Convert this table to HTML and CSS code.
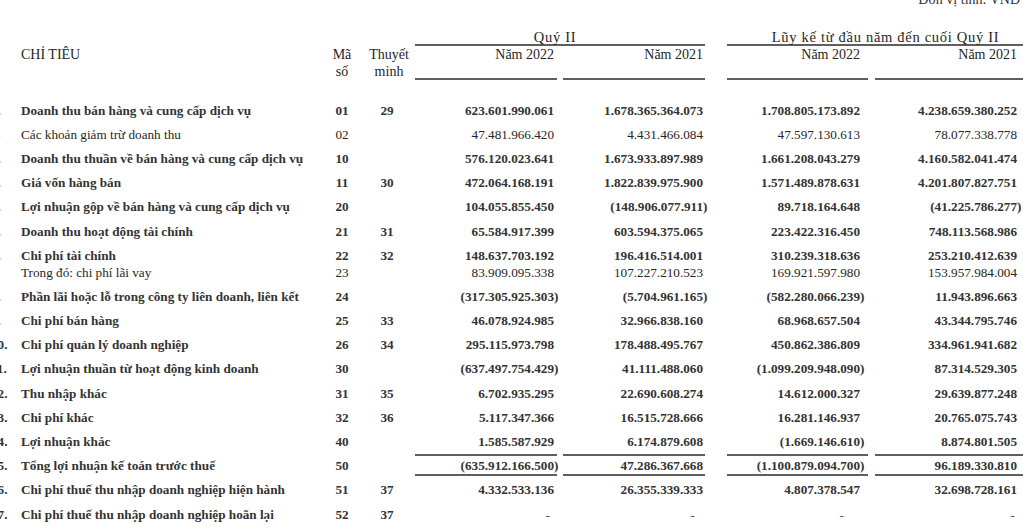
FILE: index.html
```html
<!DOCTYPE html>
<html lang="vi">
<head>
<meta charset="utf-8">
<title>Kết quả hoạt động kinh doanh</title>
<link rel="stylesheet" href="styles.css">
</head>
<body>
<div class="sheet">
  <div class="unit">Đơn vị tính: VND</div>

  <div class="row head-group">
    <div class="grp grp-q"><span>Quý II</span></div>
    <div class="grp grp-y"><span>Lũy kế từ đầu năm đến cuối Quý II</span></div>
  </div>

  <div class="row head">
    <div class="c-no"></div>
    <div class="c-label">CHỈ TIÊU</div>
    <div class="c-code">Mã<br>số</div>
    <div class="c-note">Thuyết<br>minh</div>
    <div class="c-v c1">Năm 2022</div>
    <div class="c-v c2">Năm 2021</div>
    <div class="c-v c3">Năm 2022</div>
    <div class="c-v c4">Năm 2021</div>
  </div>

  <div class="body">
    <div class="row b">
      <div class="c-no">1.</div><div class="c-label">Doanh thu bán hàng và cung cấp dịch vụ</div><div class="c-code">01</div><div class="c-note">29</div>
      <div class="c-v c1">623.601.990.061</div><div class="c-v c2">1.678.365.364.073</div><div class="c-v c3">1.708.805.173.892</div><div class="c-v c4">4.238.659.380.252</div>
    </div>
    <div class="row">
      <div class="c-no">2.</div><div class="c-label">Các khoản giảm trừ doanh thu</div><div class="c-code">02</div><div class="c-note"></div>
      <div class="c-v c1">47.481.966.420</div><div class="c-v c2">4.431.466.084</div><div class="c-v c3">47.597.130.613</div><div class="c-v c4">78.077.338.778</div>
    </div>
    <div class="row b">
      <div class="c-no">3.</div><div class="c-label">Doanh thu thuần về bán hàng và cung cấp dịch vụ</div><div class="c-code">10</div><div class="c-note"></div>
      <div class="c-v c1">576.120.023.641</div><div class="c-v c2">1.673.933.897.989</div><div class="c-v c3">1.661.208.043.279</div><div class="c-v c4">4.160.582.041.474</div>
    </div>
    <div class="row b">
      <div class="c-no">4.</div><div class="c-label">Giá vốn hàng bán</div><div class="c-code">11</div><div class="c-note">30</div>
      <div class="c-v c1">472.064.168.191</div><div class="c-v c2">1.822.839.975.900</div><div class="c-v c3">1.571.489.878.631</div><div class="c-v c4">4.201.807.827.751</div>
    </div>
    <div class="row b">
      <div class="c-no">5.</div><div class="c-label">Lợi nhuận gộp về bán hàng và cung cấp dịch vụ</div><div class="c-code">20</div><div class="c-note"></div>
      <div class="c-v c1">104.055.855.450</div><div class="c-v c2"><span class="neg">(148.906.077.911)</span></div><div class="c-v c3">89.718.164.648</div><div class="c-v c4"><span class="neg">(41.225.786.277)</span></div>
    </div>
    <div class="row b">
      <div class="c-no">6.</div><div class="c-label">Doanh thu hoạt động tài chính</div><div class="c-code">21</div><div class="c-note">31</div>
      <div class="c-v c1">65.584.917.399</div><div class="c-v c2">603.594.375.065</div><div class="c-v c3">223.422.316.450</div><div class="c-v c4">748.113.568.986</div>
    </div>
    <div class="row b has-sub">
      <div class="c-no">7.</div><div class="c-label">Chi phí tài chính</div><div class="c-code">22</div><div class="c-note">32</div>
      <div class="c-v c1">148.637.703.192</div><div class="c-v c2">196.416.514.001</div><div class="c-v c3">310.239.318.636</div><div class="c-v c4">253.210.412.639</div>
    </div>
    <div class="row sub">
      <div class="c-no"></div><div class="c-label">Trong đó: chi phí lãi vay</div><div class="c-code">23</div><div class="c-note"></div>
      <div class="c-v c1">83.909.095.338</div><div class="c-v c2">107.227.210.523</div><div class="c-v c3">169.921.597.980</div><div class="c-v c4">153.957.984.004</div>
    </div>
    <div class="row b">
      <div class="c-no">8.</div><div class="c-label">Phần lãi hoặc lỗ trong công ty liên doanh, liên kết</div><div class="c-code">24</div><div class="c-note"></div>
      <div class="c-v c1"><span class="neg">(317.305.925.303)</span></div><div class="c-v c2"><span class="neg">(5.704.961.165)</span></div><div class="c-v c3"><span class="neg">(582.280.066.239)</span></div><div class="c-v c4">11.943.896.663</div>
    </div>
    <div class="row b">
      <div class="c-no">9.</div><div class="c-label">Chi phí bán hàng</div><div class="c-code">25</div><div class="c-note">33</div>
      <div class="c-v c1">46.078.924.985</div><div class="c-v c2">32.966.838.160</div><div class="c-v c3">68.968.657.504</div><div class="c-v c4">43.344.795.746</div>
    </div>
    <div class="row b">
      <div class="c-no">10.</div><div class="c-label">Chi phí quản lý doanh nghiệp</div><div class="c-code">26</div><div class="c-note">34</div>
      <div class="c-v c1">295.115.973.798</div><div class="c-v c2">178.488.495.767</div><div class="c-v c3">450.862.386.809</div><div class="c-v c4">334.961.941.682</div>
    </div>
    <div class="row b">
      <div class="c-no">11.</div><div class="c-label">Lợi nhuận thuần từ hoạt động kinh doanh</div><div class="c-code">30</div><div class="c-note"></div>
      <div class="c-v c1"><span class="neg">(637.497.754.429)</span></div><div class="c-v c2">41.111.488.060</div><div class="c-v c3"><span class="neg">(1.099.209.948.090)</span></div><div class="c-v c4">87.314.529.305</div>
    </div>
    <div class="row b">
      <div class="c-no">12.</div><div class="c-label">Thu nhập khác</div><div class="c-code">31</div><div class="c-note">35</div>
      <div class="c-v c1">6.702.935.295</div><div class="c-v c2">22.690.608.274</div><div class="c-v c3">14.612.000.327</div><div class="c-v c4">29.639.877.248</div>
    </div>
    <div class="row b">
      <div class="c-no">13.</div><div class="c-label">Chi phí khác</div><div class="c-code">32</div><div class="c-note">36</div>
      <div class="c-v c1">5.117.347.366</div><div class="c-v c2">16.515.728.666</div><div class="c-v c3">16.281.146.937</div><div class="c-v c4">20.765.075.743</div>
    </div>
    <div class="row b">
      <div class="c-no">14.</div><div class="c-label">Lợi nhuận khác</div><div class="c-code">40</div><div class="c-note"></div>
      <div class="c-v c1">1.585.587.929</div><div class="c-v c2">6.174.879.608</div><div class="c-v c3"><span class="neg">(1.669.146.610)</span></div><div class="c-v c4">8.874.801.505</div>
    </div>
    <div class="row b total">
      <div class="c-no">15.</div><div class="c-label">Tổng lợi nhuận kế toán trước thuế</div><div class="c-code">50</div><div class="c-note"></div>
      <div class="c-v c1"><span class="neg">(635.912.166.500)</span></div><div class="c-v c2">47.286.367.668</div><div class="c-v c3"><span class="neg">(1.100.879.094.700)</span></div><div class="c-v c4">96.189.330.810</div>
    </div>
    <div class="row b">
      <div class="c-no">16.</div><div class="c-label">Chi phí thuế thu nhập doanh nghiệp hiện hành</div><div class="c-code">51</div><div class="c-note">37</div>
      <div class="c-v c1">4.332.533.136</div><div class="c-v c2">26.355.339.333</div><div class="c-v c3">4.807.378.547</div><div class="c-v c4">32.698.728.161</div>
    </div>
    <div class="row b">
      <div class="c-no">17.</div><div class="c-label">Chi phí thuế thu nhập doanh nghiệp hoãn lại</div><div class="c-code">52</div><div class="c-note">37</div>
      <div class="c-v c1"><span class="dash">-</span></div><div class="c-v c2"><span class="dash">-</span></div><div class="c-v c3"><span class="dash">-</span></div><div class="c-v c4"><span class="dash">-</span></div>
    </div>
  </div>
</div>
</body>
</html>
```

FILE: styles.css
```css
html, body {
  margin: 0;
  padding: 0;
  overflow: hidden;
  background: #ffffff;
}

body {
  font-family: "Liberation Serif", "Times New Roman", serif;
  font-size: 13.2px;
  color: #262626;
}

.sheet {
  width: 1041px;
  margin-left: -9px;
}

.unit {
  margin-top: -8px;
  height: 15px;
  line-height: 15px;
  font-size: 14px;
  text-align: right;
  padding-right: 12px;
  color: #333333;
}

.row {
  display: grid;
  grid-template-columns: 30px 304px 34px 56px 142px 148px 163px 164px;
}

/* group headings */
.head-group {
  margin-top: 24px;
}

.grp {
  line-height: 13px;
  font-size: 14.5px;
  letter-spacing: 0.7px;
  text-align: center;
  border-bottom: 2px solid #5f5f5f;
  white-space: nowrap;
}

.grp-q {
  grid-column: 5 / 7;
  padding-right: 10px;
}

.grp-y {
  grid-column: 7 / 9;
  margin-left: 22px;
  padding-left: 12px;
}

/* column headings */
.head > div {
  line-height: 17px;
  font-size: 14px;
}

.head .c-v {
  border-bottom: 2px solid #5f5f5f;
}

.c-no {
  white-space: nowrap;
}

.c-code {
  text-align: center;
}

.c-note {
  text-align: center;
  padding-left: 4px;
}

.c-v {
  text-align: right;
  white-space: nowrap;
}

.c1 { padding-right: 3px; }
.c2 { margin-left: 6px; padding-right: 2px; }
.c3 { margin-left: 22px; padding-right: 8px; }
.c4 { margin-left: 7px; padding-right: 15px; }

/* body */
.body {
  margin-top: 18px;
}

.body .row > div {
  padding: 3.6px 0;
  line-height: 17px;
}

.body .row > .c1 { padding-right: 3px; }
.body .row > .c2 { padding-right: 2px; }
.body .row > .c3 { padding-right: 8px; }
.body .row > .c4 { padding-right: 15px; }

.b > div {
  font-weight: 700;
  color: #333333;
}

.has-sub > div {
  padding-bottom: 0 !important;
}

.sub > div {
  padding-top: 0 !important;
}

.neg {
  margin-right: -0.333em;
}

.total .c-v {
  border-top: 2px solid #5f5f5f;
  border-bottom: 2px solid #5f5f5f;
  padding-top: 1.6px !important;
  padding-bottom: 0 !important;
  margin-bottom: 1.6px;
}

.dash {
  color: #555555;
  font-weight: 400;
}

.c1 .dash { margin-right: 4px; }
.c2 .dash { margin-right: 8px; }
.c3 .dash { margin-right: 16px; }
.c4 .dash { margin-right: 2px; }
```
